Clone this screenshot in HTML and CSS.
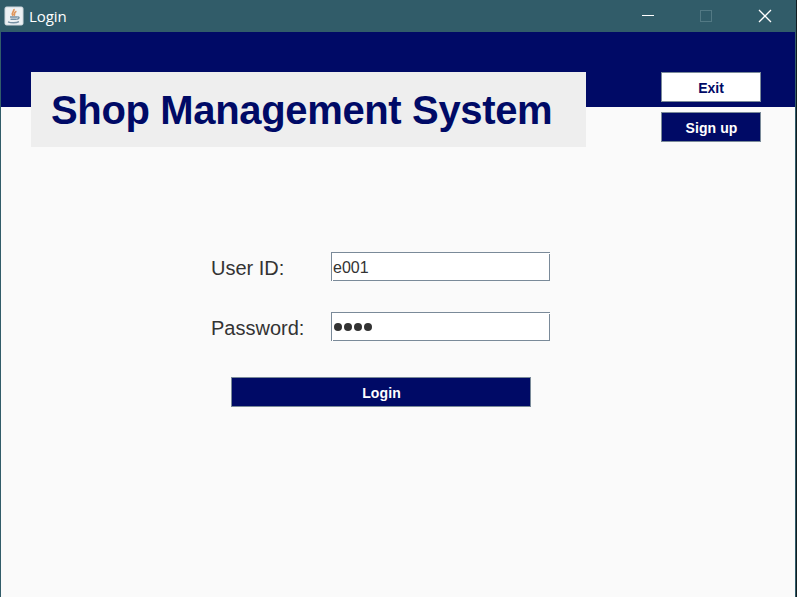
FILE: index.html
```html
<!DOCTYPE html>
<html lang="en">
<head>
<meta charset="utf-8">
<title>Login</title>
<link rel="stylesheet" href="styles.css">
</head>
<body>
<div class="window">
  <header class="titlebar">
    <svg class="app-icon" width="20" height="20" viewBox="0 0 20 20">
      <rect x="1" y="1" width="18" height="18" rx="1.5" fill="#edf1f4" stroke="#cfd8de"/>
      <path d="M10 3C10.5 5.5 6.7 6 9 9.8M12.4 5.2C9 6.7 11.4 7.8 10 9.8" fill="none" stroke="#e0965c" stroke-width="1.7"/>
      <path d="M6 11h7M6.5 13.2h6M4 15.8c3 1.4 8.5 1.2 11-.2M13.2 11c2.8-.5 2.3 2-.5 2.3" fill="none" stroke="#7590a3" stroke-width="1.4"/>
    </svg>
    <span class="window-title">Login</span>
    <svg class="controls" width="134" height="20" viewBox="0 0 134 20">
      <path d="M2 9.5h12" stroke="#fff"/>
      <rect x="60.5" y="4.5" width="11" height="11" fill="none" stroke="#527984"/>
      <path d="M119 4l12 12M131 4l-12 12" stroke="#fff" stroke-width="1.3"/>
    </svg>
  </header>
  <main class="content">
    <section class="banner">
      <h1 class="heading">Shop Management System</h1>
      <div class="actions">
        <button class="button light">Exit</button>
        <button class="button">Sign up</button>
      </div>
    </section>
    <form class="form">
      <label class="row"><span class="label">User ID:</span><span class="field">e001</span></label>
      <label class="row"><span class="label">Password:</span><span class="field dots"><i></i><i></i><i></i><i></i></span></label>
      <button class="button submit" type="button">Login</button>
    </form>
  </main>
</div>
</body>
</html>
```
FILE: styles.css
```css
* { box-sizing: border-box; }
body { margin: 0; background: #101d22; font-family: "Liberation Sans", Arial, sans-serif; }
.window { width: 796px; height: 597px; background: #315c69; overflow: hidden; }
.titlebar { height: 32px; display: flex; align-items: center; padding: 0 22px 0 4px; color: #fff; }
.window-title { font: 15px/20px "Open Sans", "Noto Sans", sans-serif; letter-spacing: -0.1px; margin-left: 5px; flex: 1; }
.app-icon { margin-top: -1px; }
.content { margin: 0 1px; height: 565px; background: linear-gradient(#000a66 75px, #fafafa 75px); }
.banner { display: flex; justify-content: space-between; padding: 40px 34px 0 30px; }
.heading { width: 555px; height: 75px; margin: 0; background: #eee; color: #000a66; font-size: 40px; line-height: 76px; padding-left: 20px; white-space: nowrap; letter-spacing: -0.35px; }
.actions { display: flex; flex-direction: column; gap: 10px; width: 100px; }
.button { display: block; width: 100%; height: 30px; padding: 2px 0 0 1px; border: 1px solid #7a8a99; border-radius: 0; background: #000a66; color: #fff; font: bold 14px/26px "Liberation Sans", Arial, sans-serif; letter-spacing: 0.1px; }
.light { background: #fff; color: #000a66; padding-left: 0; letter-spacing: 0; }
.form { padding: 105px 0 0 210px; }
.row { display: flex; height: 29px; margin-bottom: 31px; }
.label { width: 120px; font-size: 20px; line-height: 33px; color: #333; }
.field { position: relative; width: 219px; border: 1px solid #7a8a99; background: #fff; padding-left: 1px; font-size: 16px; line-height: 29px; color: #333; }
.field::before, .field::after { content: ""; position: absolute; width: 1px; height: 1px; background: #fff; }
.field::before { left: 0; bottom: -1px; }
.field::after { right: -1px; top: 0; }
.dots { display: flex; align-items: center; gap: 2px; padding: 1px 0 0 1.5px; }
.dots i { width: 8px; height: 8px; border-radius: 50%; background: #333; }
.submit { width: 300px; margin: 36px 0 0 20px; }
```
